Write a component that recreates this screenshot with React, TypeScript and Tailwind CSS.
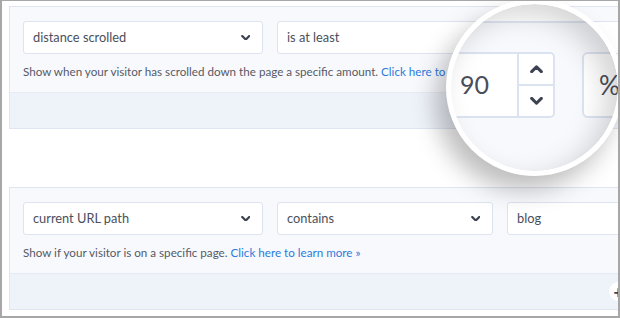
const FONT = "font-['Lato','Open_Sans',sans-serif]";

function Chevron({ up = false, size = 11, stroke = 2.6 }: { up?: boolean; size?: number; stroke?: number }) {
  return (
    <svg width={size} height={size * 0.62} viewBox="0 0 12 7.5" fill="none" className="shrink-0">
      <polyline
        points={up ? '1.5,6.2 6,1.7 10.5,6.2' : '1.5,1.3 6,5.8 10.5,1.3'}
        stroke="#3d4250"
        strokeWidth={stroke}
        strokeLinecap="round"
        strokeLinejoin="round"
      />
    </svg>
  );
}

function Select({ label, width }: { label: string; width: string }) {
  return (
    <div className={`${width} h-[33px] shrink-0 flex items-center justify-between pl-[9px] pr-[12px] bg-white border border-[#dde3ef] rounded-[3px]`}>
      <span className="text-[12.8px] text-[#4a4f5c]">{label}</span>
      <Chevron size={9.5} stroke={2.8} />
    </div>
  );
}

function Field({ value }: { value: string }) {
  return (
    <div className="w-[200px] h-[33px] shrink-0 flex items-center pl-[9px] bg-white border border-[#dde3ef] rounded-[3px]">
      <span className="text-[12.8px] text-[#4a4f5c]">{value}</span>
    </div>
  );
}

function Panel({ children, help, plus = false }: { children: React.ReactNode; help: string; plus?: boolean }) {
  return (
    <div className="w-[640px] shrink-0 border border-[#dfe5f1] bg-[#f8f9fd]">
      <div className="pt-[14px] pl-[13px] pb-[12px]">
        <div className="flex gap-[14px]">{children}</div>
        <p className="mt-[10px] h-[16px] leading-[16px] text-[11.65px] text-[#555a66] whitespace-nowrap">
          {help} <a className="text-[#2b7cdc]">Click here to learn more »</a>
        </p>
      </div>
      <div className="relative h-[36px] bg-[#eef2f9] border-t border-[#e6ebf5]">
        {plus && (
          <div className="absolute left-[599px] top-[8px] w-[19px] h-[19px] rounded-full bg-white flex items-center justify-center">
            <span className="text-[17px] leading-none font-black text-[#3f4452]">+</span>
          </div>
        )}
      </div>
    </div>
  );
}

function Lens() {
  return (
    <div className="absolute left-[444px] top-[-2px] w-[177px] h-[177px] rounded-full border-[5px] border-white bg-white shadow-[-10px_14px_24px_rgba(0,0,0,0.26)] overflow-hidden">
      <div className="relative w-full h-full rounded-full overflow-hidden bg-[#f7f9fd]">
        {/* magnified panel top edge */}
        <div className="absolute left-0 top-0 w-full h-[19px] bg-white border-b-2 border-[#dfe6f2]" />
        {/* number input with stepper */}
        <div className="absolute left-[-20px] top-[48px] w-[124px] h-[66px] flex bg-white border-2 border-[#dce3f0] rounded-[5px]">
          <div className="flex-1 flex items-center pl-[27px]">
            <span className="text-[25px] text-[#4a4e5a]">90</span>
          </div>
          <div className="w-[36px] flex flex-col border-l-2 border-[#dce3f0]">
            <div className="flex-1 flex items-center justify-center border-b-2 border-[#dce3f0]">
              <Chevron up size={13} stroke={2.8} />
            </div>
            <div className="flex-1 flex items-center justify-center">
              <Chevron size={13} stroke={2.8} />
            </div>
          </div>
        </div>
        {/* unit box */}
        <div className="absolute left-[131px] top-[48px] w-[80px] h-[66px] flex items-center pl-[15px] bg-white border-2 border-[#dce3f0] rounded-[6px]">
          <span className="text-[26px] text-[#4a4e5a]">%</span>
        </div>
        {/* lens shading */}
        <div className="absolute inset-0 rounded-full shadow-[inset_-12px_10px_28px_rgba(0,0,0,0.17)]" />
      </div>
    </div>
  );
}

export default function App() {
  return (
    <div className={`${FONT} relative w-[620px] h-[318px] overflow-hidden bg-white border-t border-l-2 border-r-2 border-b-2 border-[#a7a7a7]`}>
      <div className="flex flex-col gap-[58px] pl-[7px] pt-[5px]">
        <Panel help="Show when your visitor has scrolled down the page a specific amount.">
          <Select label="distance scrolled" width="w-[240px]" />
          <Select label="is at least" width="w-[216px]" />
          <Field value="90" />
        </Panel>
        <Panel help="Show if your visitor is on a specific page." plus>
          <Select label="current URL path" width="w-[240px]" />
          <Select label="contains" width="w-[216px]" />
          <Field value="blog" />
        </Panel>
      </div>
      <Lens />
    </div>
  );
}
